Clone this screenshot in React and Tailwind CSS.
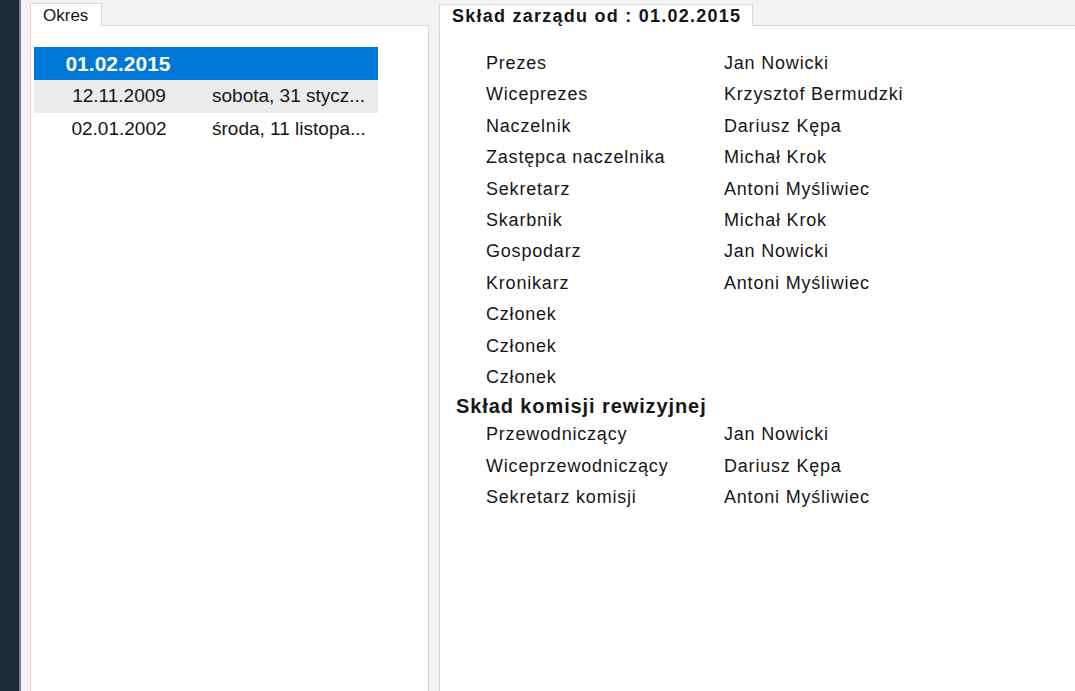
import React from "react";

const board = [
  ["Prezes", "Jan Nowicki"],
  ["Wiceprezes", "Krzysztof Bermudzki"],
  ["Naczelnik", "Dariusz Kępa"],
  ["Zastępca naczelnika", "Michał Krok"],
  ["Sekretarz", "Antoni Myśliwiec"],
  ["Skarbnik", "Michał Krok"],
  ["Gospodarz", "Jan Nowicki"],
  ["Kronikarz", "Antoni Myśliwiec"],
  ["Członek", ""],
  ["Członek", ""],
  ["Członek", ""],
];

const audit = [
  ["Przewodniczący", "Jan Nowicki"],
  ["Wiceprzewodniczący", "Dariusz Kępa"],
  ["Sekretarz komisji", "Antoni Myśliwiec"],
];

function Row({ label, value }) {
  return (
    <div className="flex h-[31.4px] items-center whitespace-nowrap pl-[46px] text-[18px] leading-[31.4px] tracking-[0.8px]">
      <div className="w-[238px] shrink-0">{label}</div>
      <div>{value}</div>
    </div>
  );
}

export default function App() {
  return (
    <div className="flex h-[691px] w-[1075px] overflow-hidden bg-[#f3f3f3] font-['Liberation_Sans',Arial,sans-serif] text-[#161616]">
      <div className="w-[19px] shrink-0 bg-[#1e2a38]" />
      <div className="w-[2px] shrink-0 bg-[#7d7d7d]" />
      <div className="w-[9px] shrink-0" />

      {/* Left panel */}
      <div className="flex w-[399px] shrink-0 flex-col pt-[3px]">
        <div className="flex h-[22px] items-start">
          <div className="relative z-10 flex h-[23px] items-center border border-b-0 border-[#d9d9d9] bg-white pl-[12px] pr-[13px] text-[17px] leading-none">
            Okres
          </div>
        </div>
        <div className="flex-1 border border-b-0 border-[#d9d9d9] bg-white pl-[3px] pt-[21px]">
          <div className="w-[344px]">
            <div className="flex h-[33px] items-center bg-[#0078d7] text-white">
              <div className="w-[168px] text-center text-[21px] font-bold">01.02.2015</div>
            </div>
            <div className="flex h-[33px] items-center whitespace-nowrap bg-[#ebebeb] text-[19px]">
              <div className="w-[170px] text-center">12.11.2009</div>
              <div className="pl-[8px]">sobota, 31 stycz...</div>
            </div>
            <div className="flex h-[33px] items-center whitespace-nowrap bg-white text-[19px]">
              <div className="w-[170px] text-center">02.01.2002</div>
              <div className="pl-[8px]">środa, 11 listopa...</div>
            </div>
          </div>
        </div>
      </div>

      <div className="w-[10px] shrink-0" />

      {/* Right panel */}
      <div className="flex min-w-0 flex-1 flex-col pt-[4px]">
        <div className="flex h-[21px] items-start">
          <div className="relative z-10 flex h-[22px] items-center whitespace-nowrap border border-b-0 border-[#d9d9d9] bg-white pl-[12px] pr-[11px] text-[18px] font-bold leading-none tracking-[1.25px]">
            Skład zarządu od : 01.02.2015
          </div>
        </div>
        <div className="flex-1 border-l border-t border-[#d4d4d4] bg-white pt-[22px]">
          {board.map(([l, v], i) => (
            <Row key={i} label={l} value={v} />
          ))}
          <div className="flex h-[26px] items-center whitespace-nowrap pl-[16px] text-[20px] font-bold leading-[26px] tracking-[0.9px]">
            Skład komisji rewizyjnej
          </div>
          {audit.map(([l, v], i) => (
            <Row key={i} label={l} value={v} />
          ))}
        </div>
      </div>
    </div>
  );
}
